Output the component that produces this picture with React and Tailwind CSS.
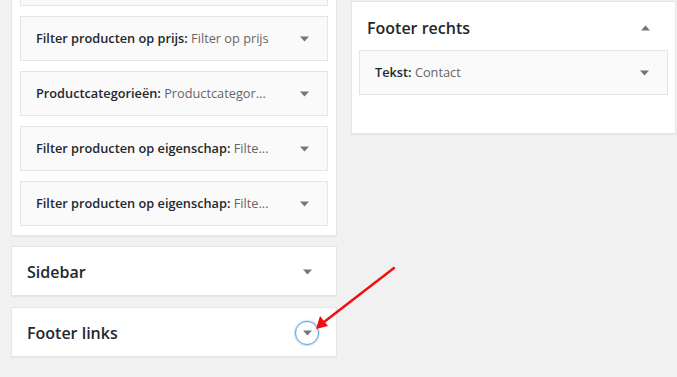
import React from 'react';

const Caret = ({ up = false }) => (
  <svg width="9" height="6" viewBox="0 0 9 6" className="block">
    {up ? (
      <polygon points="0,5.5 9,5.5 4.5,0.5" fill="#72777c" />
    ) : (
      <polygon points="0,0.5 9,0.5 4.5,5.5" fill="#72777c" />
    )}
  </svg>
);

const Widget = ({ title, sub }) => (
  <div className="h-[45px] border border-[#e5e5e5] bg-[#fafafa] flex items-center justify-between pl-[15px] pr-[18px]">
    {title ? (
      <div className="text-[12.75px] text-[#23282d] whitespace-nowrap">
        <span className="font-semibold">{title}:</span>{' '}
        <span className="text-[#666]">{sub}</span>
      </div>
    ) : (
      <div />
    )}
    <Caret />
  </div>
);

const SidebarBox = ({ name, focused }) => (
  <div className="h-[50px] border border-[#e5e5e5] bg-white flex items-center justify-between pl-[15px] pr-[24px] pt-[2px] shadow-[0_1px_1px_rgba(0,0,0,0.04)]">
    <h2 className="text-[16px] font-semibold text-[#23282d]">{name}</h2>
    <div
      className={
        focused
          ? 'w-[24px] h-[24px] -mr-[7px] rounded-full border-[1.5px] border-[#5b9dd9] shadow-[0_0_2px_rgba(30,140,190,0.8)] flex items-center justify-center'
          : 'w-[24px] h-[24px] -mr-[7px] flex items-center justify-center'
      }
    >
      <Caret />
    </div>
  </div>
);

export default function App() {
  const widgets = [
    { title: '', sub: '' },
    { title: 'Filter producten op prijs', sub: 'Filter op prijs' },
    { title: 'Productcategorieën', sub: 'Productcategor...' },
    { title: 'Filter producten op eigenschap', sub: 'Filte...' },
    { title: 'Filter producten op eigenschap', sub: 'Filte...' },
  ];

  return (
    <div
      className="relative h-[377px] overflow-hidden bg-[#f1f1f1]"
      style={{ fontFamily: '"Open Sans", "Liberation Sans", Arial, sans-serif' }}
    >
      <div className="flex items-start">
        {/* Left column */}
        <div className="ml-[11px] w-[326px] flex flex-col">
          <div className="-mt-[50px] border border-[#e5e5e5] bg-white px-[8px] pt-[10px] pb-[9px] flex flex-col gap-[10px] shadow-[0_1px_1px_rgba(0,0,0,0.04)]">
            {widgets.map((w, i) => (
              <Widget key={i} title={w.title} sub={w.sub} />
            ))}
          </div>
          <div className="mt-[10px]">
            <SidebarBox name="Sidebar" />
          </div>
          <div className="mt-[11px]">
            <SidebarBox name="Footer links" focused />
          </div>
        </div>

        {/* Right column */}
        <div className="ml-[14px] w-[325px] mt-[1px] border border-[#e5e5e5] bg-white shadow-[0_1px_1px_rgba(0,0,0,0.04)]">
          <div className="h-[48px] flex items-center justify-between pl-[15px] pr-[25px] pt-[3px]">
            <h2 className="text-[16px] font-semibold text-[#23282d]">Footer rechts</h2>
            <Caret up />
          </div>
          <div className="px-[7px] pb-[38px]">
            <Widget title="Tekst" sub="Contact" />
          </div>
        </div>
      </div>

      {/* Annotation arrow */}
      <svg className="absolute left-0 top-0 pointer-events-none" width="677" height="377">
        <line x1="394" y1="268" x2="324" y2="322" stroke="#f01010" strokeWidth="2.5" strokeLinecap="round" />
        <polygon points="316,329 320,316 328,326" fill="#f01010" />
      </svg>
    </div>
  );
}
